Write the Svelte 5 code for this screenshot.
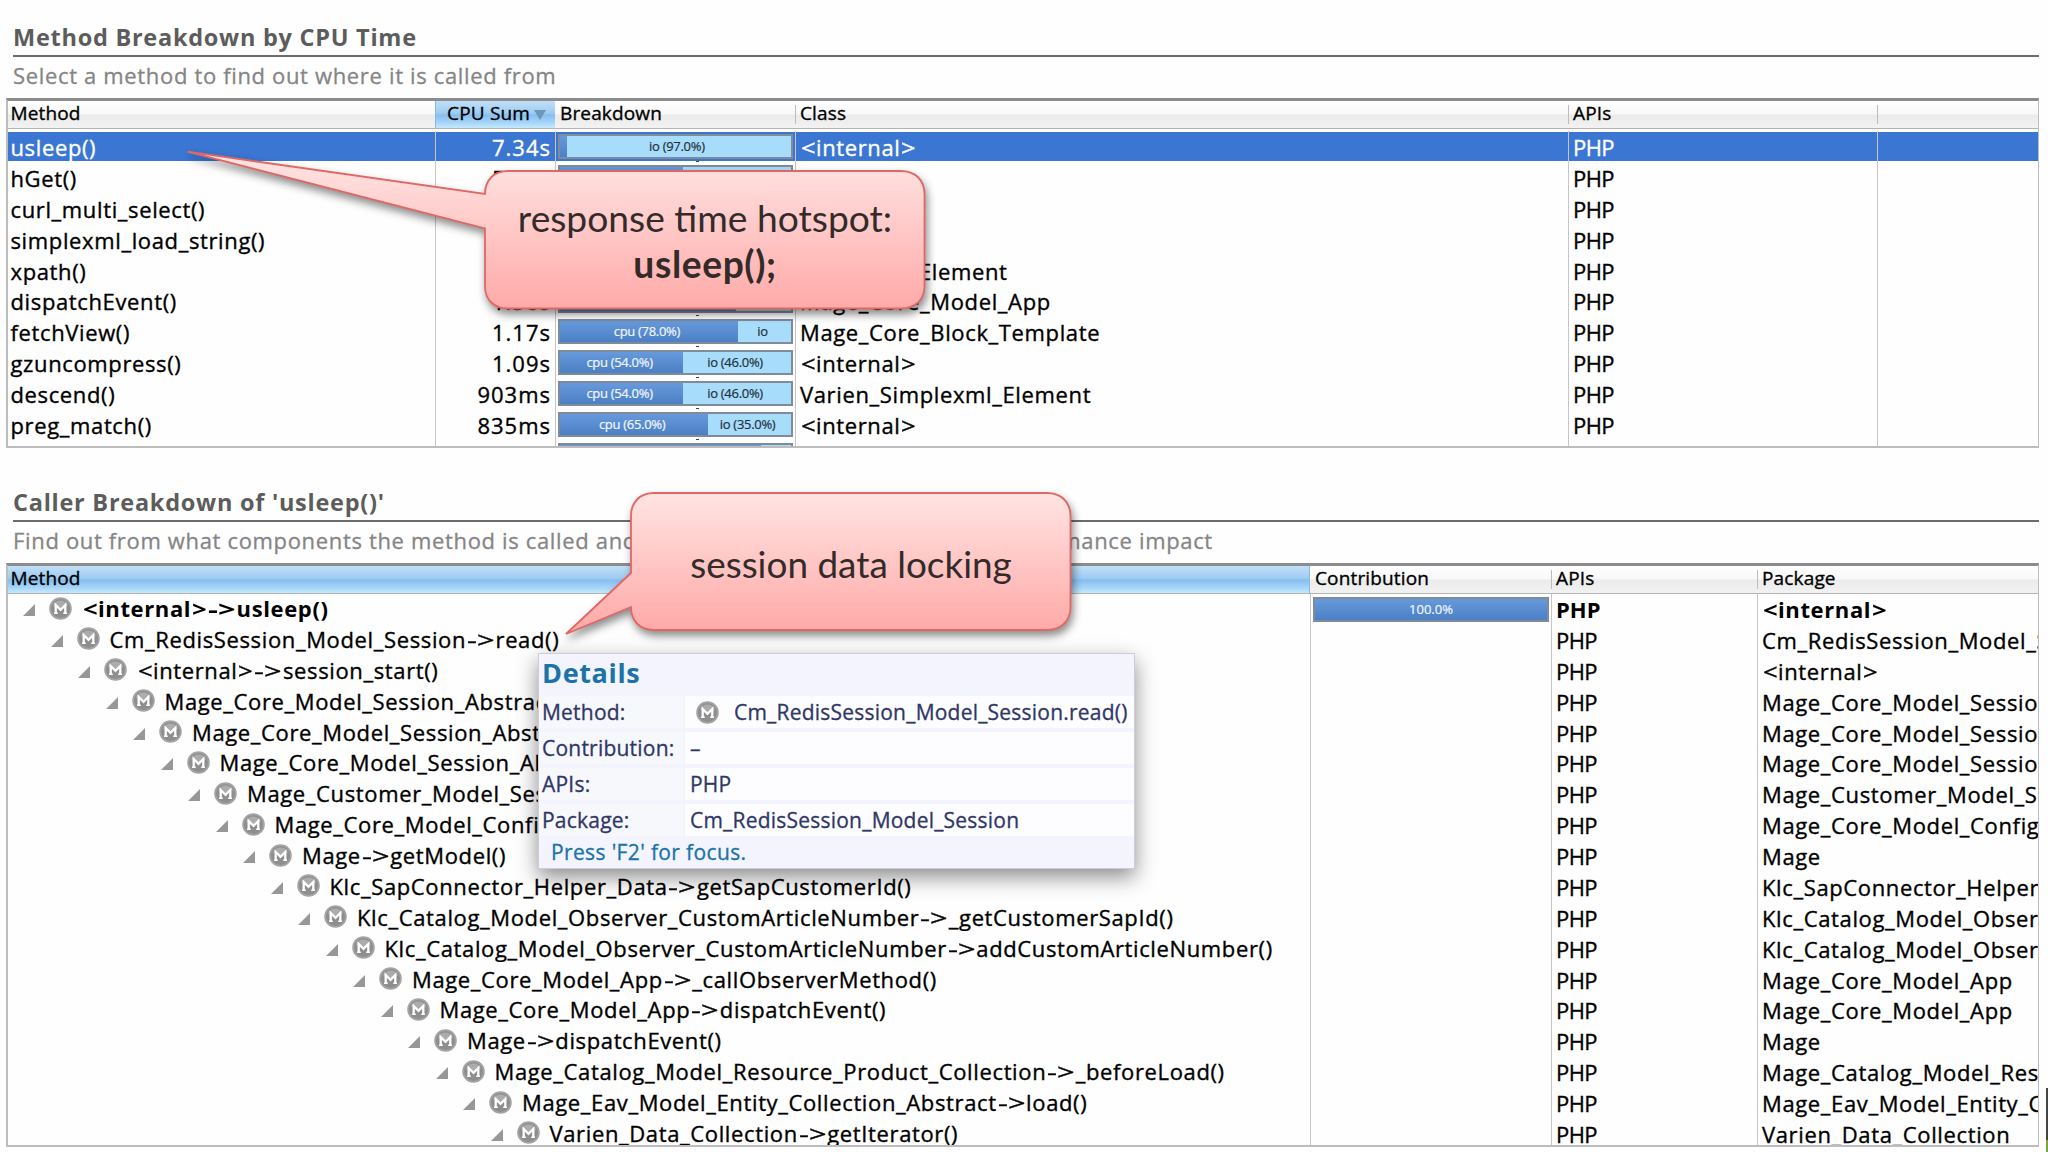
<script>
  const methods = [
    { name: 'usleep()', sum: '7.34s', cpu: 3, io: 97, cls: '<internal>', selected: true },
    { name: 'hGet()', sum: '5.20s', cpu: 54, io: 46, cls: 'Redis' },
    { name: 'curl_multi_select()', sum: '3.02s', cpu: 2, io: 98, cls: '<internal>' },
    { name: 'simplexml_load_string()', sum: '2.45s', cpu: 60, io: 40, cls: '<internal>' },
    { name: 'xpath()', sum: '1.92s', cpu: 56, io: 44, cls: 'SimpleXMLElement' },
    { name: 'dispatchEvent()', sum: '1.38s', cpu: 77, io: 23, cls: 'Mage_Core_Model_App' },
    { name: 'fetchView()', sum: '1.17s', cpu: 78, io: 22, cls: 'Mage_Core_Block_Template' },
    { name: 'gzuncompress()', sum: '1.09s', cpu: 54, io: 46, cls: '<internal>' },
    { name: 'descend()', sum: '903ms', cpu: 54, io: 46, cls: 'Varien_Simplexml_Element' },
    { name: 'preg_match()', sum: '835ms', cpu: 65, io: 35, cls: '<internal>' },
    { name: '', sum: '', cpu: 88, io: 12, cls: '' }
  ];

  const callers = [
    { name: '<internal>->usleep()', pkg: '<internal>', share: '100.0%' },
    { name: 'Cm_RedisSession_Model_Session->read()', pkg: 'Cm_RedisSession_Model_Session' },
    { name: '<internal>->session_start()', pkg: '<internal>' },
    { name: 'Mage_Core_Model_Session_Abstract_Varien->start()', pkg: 'Mage_Core_Model_Session_Abstract_Varien' },
    { name: 'Mage_Core_Model_Session_Abstract_Varien->init()', pkg: 'Mage_Core_Model_Session_Abstract_Varien' },
    { name: 'Mage_Core_Model_Session_Abstract->init()', pkg: 'Mage_Core_Model_Session_Abstract' },
    { name: 'Mage_Customer_Model_Session->__construct()', pkg: 'Mage_Customer_Model_Session' },
    { name: 'Mage_Core_Model_Config->getModelInstance()', pkg: 'Mage_Core_Model_Config' },
    { name: 'Mage->getModel()', pkg: 'Mage' },
    { name: 'Klc_SapConnector_Helper_Data->getSapCustomerId()', pkg: 'Klc_SapConnector_Helper_Data' },
    { name: 'Klc_Catalog_Model_Observer_CustomArticleNumber->_getCustomerSapId()', pkg: 'Klc_Catalog_Model_Observer_CustomArticleNumber' },
    { name: 'Klc_Catalog_Model_Observer_CustomArticleNumber->addCustomArticleNumber()', pkg: 'Klc_Catalog_Model_Observer_CustomArticleNumber' },
    { name: 'Mage_Core_Model_App->_callObserverMethod()', pkg: 'Mage_Core_Model_App' },
    { name: 'Mage_Core_Model_App->dispatchEvent()', pkg: 'Mage_Core_Model_App' },
    { name: 'Mage->dispatchEvent()', pkg: 'Mage' },
    { name: 'Mage_Catalog_Model_Resource_Product_Collection->_beforeLoad()', pkg: 'Mage_Catalog_Model_Resource_Product_Collection' },
    { name: 'Mage_Eav_Model_Entity_Collection_Abstract->load()', pkg: 'Mage_Eav_Model_Entity_Collection_Abstract' },
    { name: 'Varien_Data_Collection->getIterator()', pkg: 'Varien_Data_Collection' }
  ];

  const INDENT = 27.5;

  function barLabel(kind, pct) {
    if (pct < 10) return '';
    return pct < 30 ? kind : `${kind} (${pct}.0%)`;
  }

  // arrows and angle brackets are set wider than the rest of a signature
  function parts(text) {
    return text.split(/(->|<|>)/).filter(Boolean);
  }
</script>

{#snippet methodIcon()}
  <svg class="m-icon" width="23" height="23" viewBox="0 0 23 23">
    <circle cx="11.5" cy="11.5" r="10.4" fill="#8e8e8e" stroke="#a4a4a4" stroke-width="1.8" />
    <path d="M4 8.5 A8.2 8.2 0 0 1 19 8.5 L11.5 13 Z" fill="#acacac" />
    <path d="M6.7 16.6 V8 L11.5 12.8 L16.3 8 V16.6" fill="none" stroke="#fff" stroke-width="2.3" />
    <path d="M5 16.3 H8.8 M14.2 16.3 H18" stroke="#fff" stroke-width="1.6" />
  </svg>
{/snippet}

{#snippet code(text)}
  {#each parts(text) as p}{#if p === '->'}<i class="arrow">{p}</i>{:else if p === '<' || p === '>'}<i class="angle">{p}</i>{:else}{p}{/if}{/each}
{/snippet}

<main>
  <section class="panel">
    <h2>Method Breakdown by CPU Time</h2>
    <p class="subtitle">Select a method to find out where it is called from</p>

    <div class="table methods">
      <div class="row head">
        <div class="cell">Method</div>
        <div class="cell sorted num">CPU Sum<i class="sort"></i></div>
        <div class="cell plain">Breakdown</div>
        <div class="cell">Class</div>
        <div class="cell">APIs</div>
        <div class="cell"></div>
      </div>
      <div class="body">
        {#each methods as m}
          <div class="row" class:selected={m.selected}>
            <div class="cell">{m.name}</div>
            <div class="cell num">{m.sum}</div>
            <div class="cell bar-cell">
              <div class="bar">
                <span class="cpu" style:width="{m.cpu * 0.987}%">{barLabel('cpu', m.cpu)}</span>
                <span class="io">{barLabel('io', m.io)}</span>
              </div>
            </div>
            <div class="cell">{@render code(m.cls)}</div>
            <div class="cell api">{m.name ? 'PHP' : ''}</div>
            <div class="cell"></div>
          </div>
        {/each}
      </div>
    </div>
  </section>

  <section class="panel second">
    <h2>Caller Breakdown of 'usleep()'</h2>
    <p class="subtitle">Find out from what components the method is called and which have the most significant performance impact</p>

    <div class="table callers">
      <div class="row head">
        <div class="cell sorted">Method</div>
        <div class="cell plain">Contribution</div>
        <div class="cell">APIs</div>
        <div class="cell">Package</div>
      </div>
      <div class="body">
        {#each callers as c, depth}
          <div class="row" class:root={depth === 0}>
            <div class="cell tree" style:padding-left="{15 + depth * INDENT}px">
              <svg class="twisty" width="12" height="12" viewBox="0 0 12 12"><path d="M12 0 V12 H0 Z" fill="#979797" /></svg>
              {@render methodIcon()}
              <span>{@render code(c.name)}</span>
            </div>
            <div class="cell bar-cell">
              {#if c.share}
                <div class="bar"><span class="cpu full">{c.share}</span></div>
              {/if}
            </div>
            <div class="cell api">PHP</div>
            <div class="cell">{@render code(c.pkg)}</div>
          </div>
        {/each}
      </div>
    </div>
  </section>

  <!-- Hover details -->
  <aside class="details">
    <h3>Details</h3>
    <dl>
      <dt>Method:</dt>
      <dd class="with-icon">{@render methodIcon()}<span>Cm_RedisSession_Model_Session.read()</span></dd>
      <dt>Contribution:</dt>
      <dd>–</dd>
      <dt>APIs:</dt>
      <dd>PHP</dd>
      <dt>Package:</dt>
      <dd>Cm_RedisSession_Model_Session</dd>
    </dl>
    <footer>Press 'F2' for focus.</footer>
  </aside>

  <!-- Callouts -->
  <svg class="bubbles" width="2048" height="1152" viewBox="0 0 2048 1152">
    <defs>
      <linearGradient id="pink-upper" gradientUnits="userSpaceOnUse" x1="0" y1="152" x2="0" y2="309">
        <stop offset="0" stop-color="#ffe6e5" />
        <stop offset="1" stop-color="#ffaaa8" />
      </linearGradient>
      <linearGradient id="pink-lower" gradientUnits="userSpaceOnUse" x1="0" y1="493" x2="0" y2="630">
        <stop offset="0" stop-color="#ffe4e3" />
        <stop offset="1" stop-color="#ffaaa8" />
      </linearGradient>
    </defs>
    <path class="bubble" fill="url(#pink-upper)" d="M187.5 151.7 L485 194 C485 180 494 171 508 171 H901 C915 171 924.5 180 924.5 194 V286 C924.5 300 915 308.500 901 308.500 H508 C494 308.500 485 300 485 286 V228.500 Z" />
    <path class="bubble" fill="url(#pink-lower)" d="M566 634 L631 573 V516 C631 502 640 493 654 493 H1047 C1061 493 1070.500 502 1070.500 516 V607 C1070.500 621 1061 630 1047 630 H654 C640 630 631 621 631 607 Z" />
  </svg>
  <div class="note first">response time hotspot:<br /><b>usleep();</b></div>
  <div class="note last">session data locking</div>

  <div class="edge"></div>
</main>

<style>
  :global(body) {
    background: #fefefe;
    overflow: hidden;
  }

  main {
    position: relative;
    width: 2048px;
    height: 1152px;
    overflow: hidden;
    box-sizing: border-box;
    padding: 14px 9px 0 6px;
    font-family: 'Open Sans', 'Noto Sans', sans-serif;
    font-size: 22px;
    color: #000;
  }

  .panel {
    height: 465px;
  }

  .panel.second {
    height: 670px;
  }

  h2 {
    margin: 0 0 0 7px;
    height: 41px;
    line-height: 47px;
    border-bottom: 2px solid #6c6c6c;
    font-size: 23.5px;
    font-weight: 700;
    letter-spacing: 0.74px;
    color: #5c5c5c;
    box-sizing: content-box;
  }

  .subtitle {
    margin: 0 0 0 7px;
    height: 41px;
    line-height: 37px;
    font-size: 22px;
    letter-spacing: 0.66px;
    color: #858585;
    white-space: nowrap;
    -webkit-text-stroke: 0.3px;
  }

  .table {
    border: 1px solid #bdbdbf;
    border-left-width: 2px;
    border-bottom-width: 2px;
    border-top: 3px solid #8c8c8e;
    box-sizing: border-box;
    background: #fefefe;
    display: flex;
    flex-direction: column;
  }

  .methods {
    height: 350px;
  }

  .callers {
    height: 584px;
  }

  .row {
    display: grid;
    height: 30.88px;
    box-sizing: border-box;
  }

  .methods .row {
    grid-template-columns: 427px 120px 240px 773px 309px 1fr;
  }

  .callers .row {
    grid-template-columns: 1302px 241px 206px 1fr;
  }

  .cell {
    position: relative;
    min-width: 0;
    overflow: hidden;
    white-space: nowrap;
    line-height: 30px;
    padding: 0 0 0 4px;
    border-left: 1px solid #c6c6ca;
    letter-spacing: 0.63px;
    -webkit-text-stroke: 0.35px;
  }

  .methods .body .cell {
    line-height: 32px;
  }

  .cell:first-child {
    border-left: none;
    padding-left: 2.5px;
  }

  .num {
    text-align: right;
    padding-right: 4px;
    letter-spacing: 1px;
  }

  .api {
    letter-spacing: -0.6px;
  }

  .arrow,
  .angle {
    display: inline-block;
    font-style: normal;
    letter-spacing: 0;
  }

  .arrow {
    transform: scaleX(1.4);
    margin: 0 4.9px;
  }

  .angle {
    transform: scaleX(1.17);
    margin: 0 1.7px;
  }

  .body {
    flex: 1;
    overflow: hidden;
  }

  .methods .body {
    padding-top: 2px;
  }

  .selected {
    background: linear-gradient(#3b76d2, #3b76d2) no-repeat 0 1px / 100% 29px;
    color: #fff;
  }

  /* Header row */
  .row.head {
    flex: none;
    height: 28px;
    font-size: 19px;
    background: linear-gradient(#fff, #f8f8f8 48%, #ebebeb 52%, #f2f2f2);
    border-bottom: 1px solid #b4b4b6;
  }

  .head .cell {
    line-height: 24px;
    padding-left: 4px;
    letter-spacing: 0.15px;
    border-left-color: transparent;
    background: linear-gradient(#bcbcbe, #bcbcbe) no-repeat 0 4px / 1px 19px;
    background-origin: border-box;
  }

  .head .cell:first-child {
    padding-left: 2.5px;
  }

  .head .cell:first-child,
  .head .cell.plain {
    background: none;
  }

  .head .cell.sorted {
    background: linear-gradient(#c0dff7, #9fccf2 45%, #86bef0 52%, #a7d5f8 80%, #c3e9fd);
    border-left-color: #8db9dd;
  }

  .callers .head .cell.sorted {
    border-right: 1px solid #8db9dd;
  }

  .head .num {
    padding-right: 9px;
  }

  .sort {
    display: inline-block;
    margin-left: 4px;
    vertical-align: 0;
    border: 6px solid transparent;
    border-top: 10px solid #6a97ba;
    border-bottom: none;
  }

  /* Bars */
  .body .cell.bar-cell {
    padding: 3px 2px 0;
  }

  .methods .bar-cell::after {
    content: '';
    position: absolute;
    left: 140px;
    bottom: 0;
    width: 3px;
    height: 1px;
    background: #444;
  }

  .bar {
    display: flex;
    height: 25px;
    box-sizing: border-box;
    border: 2px solid #7f8b98;
    font-size: 13px;
    line-height: 20px;
    letter-spacing: -0.3px;
    text-align: center;
    text-indent: -4px;
    -webkit-text-stroke: 0.2px;
  }

  .cpu {
    flex: none;
    background: linear-gradient(#6799dc, #4b80c4);
    color: #f2f6fc;
  }

  .cpu.full {
    width: 100%;
    letter-spacing: 0;
    text-indent: 0;
  }

  .io {
    flex: 1;
    background: #a8dcfb;
    color: #23313b;
  }

  /* Caller tree */
  .tree {
    display: flex;
    align-items: center;
  }

  .callers .tree.cell {
    height: 28px;
  }

  .twisty {
    flex: none;
    margin-top: 4px;
  }

  .m-icon {
    flex: none;
    margin-left: 14px;
  }

  .tree span {
    margin-left: 10px;
  }

  .root {
    font-weight: 700;
  }

  .root .cell {
    -webkit-text-stroke: 0;
  }

  .root .api {
    letter-spacing: 0;
  }

  .root .bar {
    font-weight: 400;
  }

  /* Details popup */
  .details {
    position: absolute;
    left: 538px;
    top: 653px;
    width: 597px;
    height: 216px;
    box-sizing: border-box;
    border: 1px solid #cdcdd8;
    background: #f3f4fd;
    box-shadow: 0 8px 20px rgba(0, 0, 0, 0.45);
    color: #2f3766;
    font-size: 21px;
    letter-spacing: 0.22px;
  }

  .details h3 {
    margin: 0;
    height: 42px;
    line-height: 38px;
    padding-left: 3px;
    font-size: 27px;
    letter-spacing: 0.65px;
    color: #1b73a8;
  }

  dl {
    margin: 0;
    display: grid;
    grid-template-columns: 144px 1fr;
    grid-auto-rows: 32px;
    gap: 4px 2px;
    -webkit-text-stroke: 0.3px;
  }

  dt,
  dd {
    margin: 0;
    line-height: 32px;
    white-space: nowrap;
  }

  dt {
    padding-left: 3px;
    background: #f7f8fc;
  }

  dd {
    padding-left: 5px;
    background: #fdfdff;
  }

  .with-icon {
    display: flex;
    align-items: center;
  }

  .with-icon .m-icon {
    margin-left: 6px;
  }

  .with-icon span {
    margin-left: 15px;
  }

  .details footer {
    padding-left: 12px;
    line-height: 32px;
    letter-spacing: 0.36px;
    color: #1b73a8;
    -webkit-text-stroke: 0.3px;
  }

  /* Callouts */
  .bubbles {
    position: absolute;
    left: 0;
    top: 0;
    filter: drop-shadow(2px 5px 4px rgba(0, 0, 0, 0.45));
  }

  .bubble {
    stroke: #e06864;
    stroke-width: 1.8;
  }

  .note {
    position: absolute;
    width: 440px;
    text-align: center;
    font-family: Lato, 'Open Sans', sans-serif;
    font-size: 37.2px;
    line-height: 45.5px;
    color: #332b2a;
    white-space: nowrap;
  }

  .note b {
    letter-spacing: 0.6px;
  }

  .note.first {
    left: 485px;
    top: 195px;
  }

  .note.last {
    left: 631px;
    top: 542px;
    font-size: 36.9px;
  }

  .edge {
    position: absolute;
    right: 0;
    top: 1088px;
    width: 2px;
    height: 64px;
    background: linear-gradient(#444 52px, #7ba63c 52px);
  }
</style>
